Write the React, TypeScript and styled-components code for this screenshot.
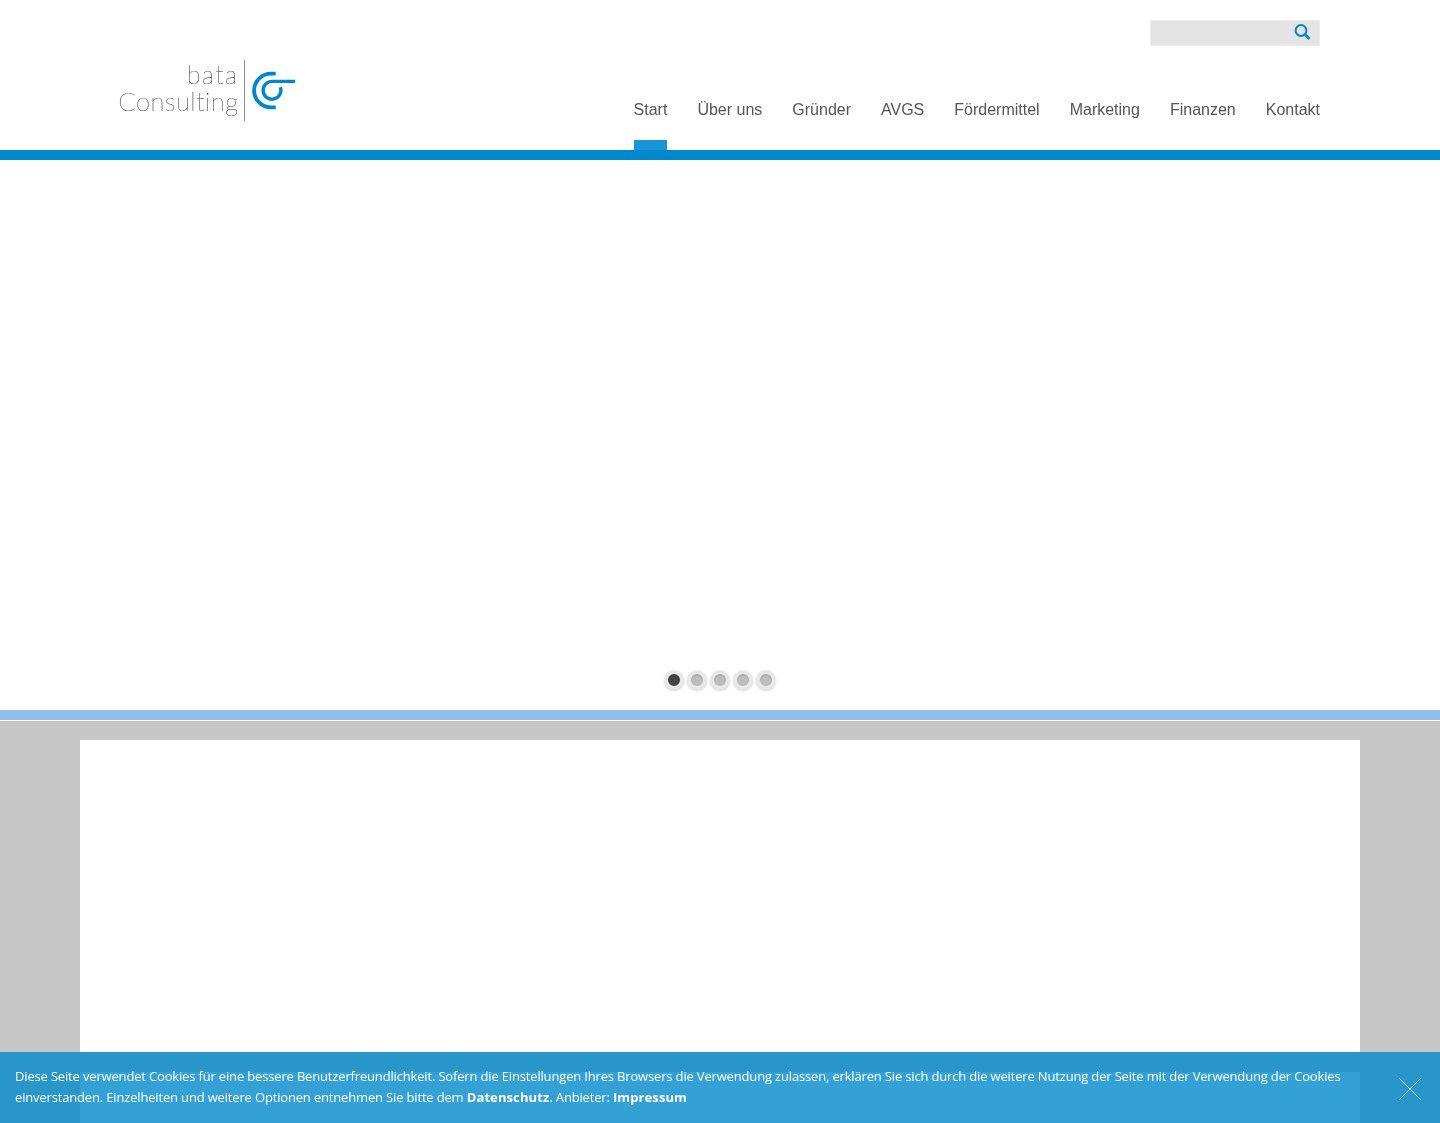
import React from "react";
import styled, { createGlobalStyle } from "styled-components";

const GlobalStyle = createGlobalStyle`
  html, body {
    margin: 0;
    padding: 0;
    height: 1123px;
    overflow: hidden;
    background: #c6c6c6;
    font-family: "Liberation Sans", Arial, sans-serif;
  }
`;

const Header = styled.header`
  box-sizing: border-box;
  height: 160px;
  background: #fff;
  border-bottom: 10px solid #0088cc;
  padding: 20px 120px 0;
  display: flex;
  justify-content: space-between;
`;

const Logo = styled.a`
  display: flex;
  align-items: stretch;
  height: 61px;
  margin-top: 40px;
`;

const LogoWords = styled.div`
  box-sizing: border-box;
  width: 125px;
  display: flex;
  flex-direction: column;
  align-items: flex-end;
  padding: 1px 5.5px 0 0;
  border-right: 1px solid #8c8c8c;
  font-family: Lato, sans-serif;
  font-weight: 100;
  font-size: 25.5px;
  line-height: 27px;
  color: #222;
  -webkit-text-stroke: 0.2px #555;
  white-space: nowrap;
  will-change: transform;
`;

const LogoLine = styled.span<{ $spacing: number }>`
  letter-spacing: ${(p) => p.$spacing}px;
`;

const LogoMark = styled.svg`
  width: 50px;
  height: 61px;
  margin-left: 1px;
`;

const HeaderRight = styled.div`
  width: 700px;
  display: flex;
  flex-direction: column;
  align-items: flex-end;
  will-change: transform;
`;

const SearchBox = styled.div`
  box-sizing: border-box;
  width: 170px;
  height: 26px;
  background: #e4e4e4;
  border: 1px solid #ececec;
  display: flex;
  justify-content: flex-end;
  padding: 3px 8px 0 0;
`;

const SearchIcon = styled.svg`
  width: 17px;
  height: 16px;
  fill: none;
  stroke: #0088cc;
`;

const Nav = styled.nav`
  display: flex;
  gap: 30px;
  margin-top: 54px;
`;

const NavItem = styled.a<{ $active?: boolean }>`
  position: relative;
  display: block;
  height: 50px;
  font-size: 16px;
  line-height: 20px;
  color: #555;
  &::after {
    content: "";
    display: ${(p) => (p.$active ? "block" : "none")};
    position: absolute;
    left: 0;
    right: 0;
    bottom: 0;
    height: 10px;
    background: #1a94d8;
  }
`;

const Hero = styled.section`
  box-sizing: border-box;
  height: 550px;
  background: #fff;
  display: flex;
  justify-content: center;
  align-items: flex-end;
  gap: 3px;
  padding-bottom: 20px;
`;

const Dot = styled.span<{ $active?: boolean }>`
  box-sizing: border-box;
  width: 20px;
  height: 20px;
  border-radius: 50%;
  border: 4px solid #e8e8e8;
  box-shadow: 0 1px 2px rgba(0, 0, 0, 0.18), inset 0 1px 2px rgba(0, 0, 0, 0.2);
  background: ${(p) => (p.$active ? "#444" : "#bdbdbd")};
`;

const Band = styled.div`
  height: 10px;
  background: #90bfeb;
  border-bottom: 1px solid #fff;
`;

const Content = styled.main`
  padding: 19px 80px 0;
  display: flex;
  flex-direction: column;
  gap: 20px;
`;

const Card = styled.div<{ $height: number }>`
  height: ${(p) => p.$height}px;
  background: #fff;
`;

const CookieBar = styled.div`
  position: fixed;
  left: 0;
  right: 0;
  bottom: 0;
  box-sizing: border-box;
  height: 71px;
  padding: 14px 15px 0;
  background: rgba(0, 136, 204, 0.8);
  color: #fff;
  font-family: "Open Sans", sans-serif;
  font-size: 13px;
  letter-spacing: -0.165px;
  line-height: 21px;
  display: flex;
  justify-content: space-between;
`;

const CookieText = styled.p`
  margin: 0;
  width: 1340px;
  b {
    font-weight: 700;
    letter-spacing: 0.1px;
  }
`;

const CloseIcon = styled.svg`
  width: 22px;
  height: 22px;
  margin: 12px 4px 0 0;
  stroke: #b5dcf0;
  stroke-width: 1;
  fill: none;
`;

export default function App() {
  const items = ["Start", "Über uns", "Gründer", "AVGS", "Fördermittel", "Marketing", "Finanzen", "Kontakt"];
  return (
    <>
      <GlobalStyle />
      <Header>
        <Logo>
          <LogoWords>
            <LogoLine $spacing={1.4}>bata</LogoLine>
            <LogoLine $spacing={0.5}>Consulting</LogoLine>
          </LogoWords>
          <LogoMark viewBox="246 60 50 61" fill="none" stroke="#0088cc">
            <path d="M275.7 73.6 H271 A16.9 16.9 0 0 0 271 107.4 H275.7" strokeWidth="3.8" />
            <path d="M295 81.4 H272 A8.9 8.9 0 1 0 280.4 87.3" strokeWidth="3.4" />
          </LogoMark>
        </Logo>
        <HeaderRight>
          <SearchBox>
            <SearchIcon viewBox="0 0 17 16">
              <circle cx="7" cy="6.5" r="5.4" strokeWidth="2" />
              <path d="M11 10.5 L15.5 15" strokeWidth="2.6" />
            </SearchIcon>
          </SearchBox>
          <Nav>
            {items.map((item, i) => (
              <NavItem key={item} $active={i === 0}>
                {item}
              </NavItem>
            ))}
          </Nav>
        </HeaderRight>
      </Header>
      <Hero>
        {[0, 1, 2, 3, 4].map((i) => (
          <Dot key={i} $active={i === 0} />
        ))}
      </Hero>
      <Band />
      <Content>
        <Card $height={312} />
        <Card $height={51} />
      </Content>
      <CookieBar>
        <CookieText>
          Diese Seite verwendet Cookies für eine bessere Benutzerfreundlichkeit. Sofern die Einstellungen Ihres Browsers die Verwendung zulassen, erklären Sie sich durch die weitere Nutzung der Seite mit der Verwendung der Cookies einverstanden. Einzelheiten und weitere Optionen entnehmen Sie bitte dem <b>Datenschutz</b>. Anbieter: <b>Impressum</b>
        </CookieText>
        <CloseIcon viewBox="0 0 22 22">
          <path d="M0 0 L22 22 M22 0 L0 22" />
        </CloseIcon>
      </CookieBar>
    </>
  );
}
